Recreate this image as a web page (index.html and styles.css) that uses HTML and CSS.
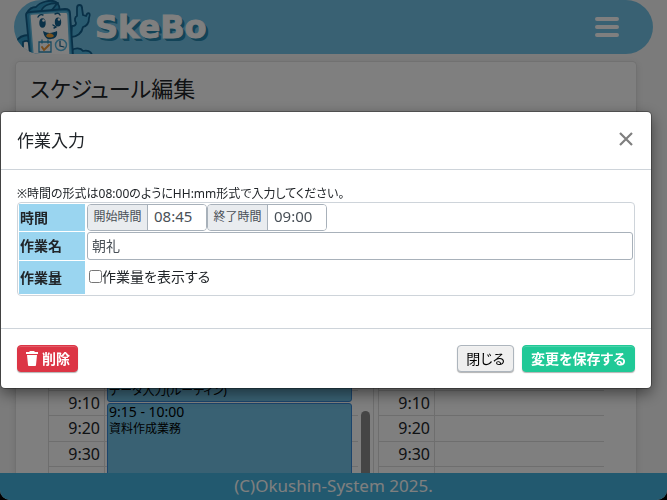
FILE: index.html
```html
<!DOCTYPE html>
<html lang="ja">
<head>
  <meta charset="UTF-8">
  <meta name="viewport" content="width=device-width, initial-scale=1">
  <title>SkeBo</title>
  <link rel="stylesheet" href="styles.css">
</head>
<body>
  <div class="page">
    <header class="navbar">
      <a class="brand" href="#">
        <svg class="mascot" width="80" height="54" viewBox="0 0 80 54" aria-hidden="true">
          <g stroke="#12618f" stroke-width="1.8" stroke-linejoin="round" stroke-linecap="round">
            <path fill="#329bc9" d="M15 35C8 35 4 38 2 42l5 7c2-3 5-5 9-5z"/>
            <path fill="#fff" d="M9 42c3-2 6-1 7 1l1 9H9z"/>
            <path fill="#52b5de" d="M58 26c3 0 4-1 4-3-2-3-1-6 1-7V8c0-4 5-4 5 0l1 7 3 1 1-2c2-2 4 0 2 4 0 5-2 8-6 9-1 6-6 10-12 10z"/>
            <path fill="#52b5de" d="M57 51c4-4 10-3 12 0 4-1 8 0 9 4H57z"/>
            <path fill="#329bc9" d="M13 13c2-4 5-6 9-6 4-5 15-8 20-5 3 2 4 6 3 8-7 4-21 4-32 3z"/>
            <path fill="#52b5de" d="M27 12c1-6 8-9 17-9-3 2-3 4-7 8z"/>
            <path fill="#329bc9" d="M12 15c0-2 2-3 4-3l35-3c3 0 5 1 5 4l3 42H16z"/>
            <path fill="#fff" stroke="#65bce1" stroke-width="1.4" d="M18 14l33-2c2 0 3 1 3 3l2 40H19L16 17c0-2 0-3 2-3z"/>
          </g>
          <g fill="#12618f">
            <ellipse cx="28.500" cy="23" rx="3.200" ry="4.800"/>
            <ellipse cx="44" cy="22" rx="3.200" ry="4.500"/>
            <path d="M29 31c5 3 10 2 14 0 1 5-2 8-6 8-4 1-7-2-8-8z"/>
          </g>
          <circle cx="29.500" cy="20.500" r="1.300" fill="#fff"/>
          <circle cx="45" cy="19.500" r="1.300" fill="#fff"/>
          <path fill="#f5a43a" d="M32 36c2-4 6-3 8 0-2 2-6 2-8 0z"/>
          <g fill="none" stroke-linecap="round">
            <path stroke="#12618f" stroke-width="1.400" d="M24 17c1-2 3-3 5-2m12-1c2-1 4-1 5 1m-7 10l3 2-2 1"/>
            <path stroke="#2c91c2" stroke-width="1.300" d="M25 42h12v10H25zM28 40v3m6-3v3"/>
            <path stroke="#ee983b" stroke-width="2" d="M28 47l2 3 5-5"/>
            <circle cx="47" cy="45" r="5.500" stroke="#5bb7df" stroke-width="1.500"/>
            <path stroke="#12618f" stroke-width="1.200" d="M46 41v5l4 1"/>
          </g>
        </svg>
        <span class="brand-name">SkeBo</span>
      </a>
      <button class="menu-button" aria-label="メニュー">
        <svg width="24" height="20" viewBox="0 0 24 20"><path d="M2 2h20M2 10h20M2 18h20" stroke="#fff" stroke-width="4" stroke-linecap="round"/></svg>
      </button>
    </header>

    <main class="card">
      <h1>スケジュール編集</h1>
      <div class="calendars">
        <div class="pane">
          <div class="calendar">
            <span class="time">7:30</span>
            <span class="time">7:40</span>
            <span class="time">7:50</span>
            <span class="time">8:00</span>
            <span class="time">8:10</span>
            <span class="time">8:20</span>
            <span class="time">8:30</span>
            <span class="time">8:40</span>
            <span class="time">8:50</span>
            <span class="time">9:00</span>
            <span class="time">9:10</span>
            <span class="time">9:20</span>
            <span class="time">9:30</span>
            <span class="time">9:40</span>
            <div class="event event-routine"><span class="event-time">9:00 - 9:15</span><br>データ入力(ルーティン)</div>
            <div class="event event-document"><span class="event-time">9:15 - 10:00</span><br>資料作成業務</div>
          </div>
          <div class="scrollbar"><div class="thumb"></div></div>
        </div>
        <div class="pane">
          <div class="calendar">
            <span class="time">7:30</span>
            <span class="time">7:40</span>
            <span class="time">7:50</span>
            <span class="time">8:00</span>
            <span class="time">8:10</span>
            <span class="time">8:20</span>
            <span class="time">8:30</span>
            <span class="time">8:40</span>
            <span class="time">8:50</span>
            <span class="time">9:00</span>
            <span class="time">9:10</span>
            <span class="time">9:20</span>
            <span class="time">9:30</span>
            <span class="time">9:40</span>
          </div>
        </div>
      </div>
    </main>

    <footer class="footer">(C)Okushin-System 2025.</footer>
  </div>

  <div class="backdrop">
    <form class="modal" role="dialog" aria-labelledby="modal-title">
      <div class="modal-header">
        <h2 id="modal-title">作業入力</h2>
        <button type="button" class="close" aria-label="閉じる">
          <svg width="14" height="14" viewBox="0 0 14 14"><path d="M1 1l12 12M13 1L1 13" stroke="#7f7f7f" stroke-width="2.200"/></svg>
        </button>
      </div>
      <div class="modal-body">
        <p class="note">※時間の形式は08:00のようにHH:mm形式で入力してください。</p>
        <table class="work">
          <tr>
            <th>時間</th>
            <td>
              <div class="times">
                <div class="input-group">
                  <label for="start">開始時間</label>
                  <input type="text" id="start" value="08:45">
                </div>
                <div class="input-group">
                  <label for="end">終了時間</label>
                  <input type="text" id="end" value="09:00">
                </div>
              </div>
            </td>
          </tr>
          <tr>
            <th><label for="name">作業名</label></th>
            <td><input type="text" id="name" class="name" value="朝礼"></td>
          </tr>
          <tr class="amount">
            <th>作業量</th>
            <td><label class="check"><input type="checkbox">作業量を表示する</label></td>
          </tr>
        </table>
      </div>
      <div class="modal-footer">
        <button type="button" class="btn btn-danger">
          <svg width="14" height="15" viewBox="0 0 14 15"><path fill="#fff" d="M1 1h3l1-1h4l1 1h3v2H1zM2 4h10l-1 10c0 1-1 1-1 1H4s-1 0-1-1z"/></svg>
          削除
        </button>
        <button type="button" class="btn btn-default">閉じる</button>
        <button type="submit" class="btn btn-success">変更を保存する</button>
      </div>
    </form>
  </div>
</body>
</html>
```
FILE: styles.css
```css
* {
  box-sizing: border-box;
}
html {
  background: #000;
}
body {
  margin: 0;
  color: #212529;
  font-family: "Noto Sans", "Noto Sans CJK JP", sans-serif;
  font-feature-settings: "palt";
  font-size: 15px;
}
button, input {
  font: inherit;
  font-feature-settings: inherit;
}
h1, h2, p {
  margin: 0;
  font-weight: normal;
}

.page {
  display: flex;
  flex-direction: column;
  height: 100vh;
  overflow: hidden;
  background: #f6f6f6;
  border-radius: 0 0 10px 10px;
}
.navbar {
  display: flex;
  flex: none;
  align-items: center;
  justify-content: space-between;
  height: 54px;
  margin: 0 14px;
  padding-right: 34px;
  overflow: hidden;
  background: #72c3e7;
  border-radius: 27px;
}
.brand {
  display: flex;
  align-items: center;
  gap: 1px;
  color: #fff;
  text-decoration: none;
}
.mascot {
  display: block;
}
.brand-name {
  font-family: "DejaVu Sans", sans-serif;
  font-size: 32px;
  font-weight: bold;
  line-height: 54px;
  -webkit-text-stroke: 1px #fff;
  text-shadow: 1px 1px #2787ae, 2px 2px #2787ae, 3px 3px #2787ae;
}
.menu-button {
  display: flex;
  padding: 0;
  background: none;
  border: 0;
}

.card {
  flex: 1;
  min-height: 0;
  margin: 7px 30px 0 15px;
  padding: 0 32px;
  overflow: hidden;
  background: #fff;
  border: 1px solid #e2e2e2;
  border-bottom: 0;
  border-radius: 5px 5px 0 0;
  box-shadow: 0 2px 6px #ddd;
}
.card h1 {
  margin-left: -18px;
  height: 74px;
  font-size: 22px;
  line-height: 52px;
}
.calendars {
  display: flex;
  gap: 4px;
}
.pane {
  display: flex;
  flex: 1;
  border: 1px solid #ddd;
  border-width: 0 1px;
}
.pane:last-child {
  flex: 0 0 226px;
  border-right: 0;
}
.calendar {
  display: grid;
  flex: 1;
  grid-template-columns: 56px 1fr;
  grid-template-rows: repeat(30, 1fr);
  height: 381px;
  background: repeating-linear-gradient(#ddd 0 1px, #fff 1px 25.4px);
}
.time {
  grid-column: 1;
  grid-row: span 2;
  padding-right: 4px;
  border-right: 1px solid #ddd;
  font-size: 16px;
  line-height: 27px;
  text-align: right;
}
.event {
  grid-column: 2;
  margin: 0 6px 1px 2px;
  padding: 0 1px;
  overflow: hidden;
  background: #72c3e7;
  border: 1px solid #3788d8;
  border-radius: 3px;
  color: #000;
  font-size: 12px;
  line-height: 16px;
}
.event-time {
  font-size: 14px;
}
.event-routine {
  grid-row: 19 / 22;
}
.event-document {
  grid-row: 22 / 31;
}
.scrollbar {
  width: 15px;
  padding: 275px 3px 0;
}
.thumb {
  height: 100%;
  background: #8b8b8b;
  border-radius: 5px;
}
.footer {
  flex: none;
  height: 27px;
  background: #44b2de;
  color: #fff;
  line-height: 26px;
  text-align: center;
  font-size: 17px;
}

.backdrop {
  position: fixed;
  inset: 0;
  padding: 112px 16px 0 1px;
  background: rgba(0, 0, 0, .5);
}
.modal {
  background: #fff;
  border-radius: 4px;
  box-shadow: 0 5px 15px rgba(0, 0, 0, .5), 0 0 0 1px rgba(0, 0, 0, .3);
}
.modal-header {
  display: flex;
  align-items: center;
  justify-content: space-between;
  height: 58px;
  padding: 0 18px 0 16px;
  border-bottom: 1px solid #ced4da;
}
.modal-header h2 {
  font-size: 17px;
  line-height: 20px;
}
.close {
  padding: 0 0 4px;
  background: none;
  border: 0;
}
.close svg {
  display: block;
}
.modal-body {
  padding: 16px 16px 32px;
}
.note {
  font-size: 12px;
  line-height: 16px;
}
.work {
  width: 100%;
  border: 1px solid #ced4da;
  border-radius: 4px;
  border-spacing: 1px;
}
.work th {
  width: 66px;
  padding: 0 1px;
  background: #9ad5f0;
  font-size: 14px;
  line-height: 20px;
  text-align: left;
}
.work td {
  height: 27px;
  padding: 0 0 0 1px;
}
.work .amount td {
  height: 33px;
}
.times, .input-group {
  display: flex;
}
.input-group {
  width: 120px;
  height: 27px;
  border: 1px solid #a8b1ba;
  border-radius: 4px;
  overflow: hidden;
}
.input-group label {
  flex: none;
  width: 60px;
  background: #e9ecef;
  border-right: 1px solid #a8b1ba;
  color: #495057;
  font-size: 12px;
  line-height: 24px;
  text-align: center;
}
.input-group input {
  width: 100%;
  min-width: 0;
  padding: 0 6px 3px;
  border: 0;
  color: #495057;
}
.name {
  display: block;
  width: 100%;
  height: 28px;
  padding: 0 4px 2px;
  border: 1px solid #a8b1ba;
  border-radius: 3px;
  color: #495057;
  font-size: 14px;
}
.check {
  display: flex;
  align-items: center;
  font-size: 14px;
  line-height: 20px;
  padding-bottom: 2px;
}
.check input {
  margin: 0 0 0 2px;
}
.modal-footer {
  display: flex;
  gap: 8px;
  padding: 16px;
  border-top: 1px solid #ced4da;
}
.btn {
  display: flex;
  align-items: center;
  gap: 3px;
  height: 27px;
  padding: 0 8px;
  border: 1px solid;
  border-radius: 4px;
  box-shadow: inset 0 1px rgba(255, 255, 255, .2), 0 1px 1px rgba(0, 0, 0, .3);
  font-size: 14px;
  line-height: 20px;
}
.btn-danger {
  margin-right: auto;
  padding: 0 7px;
  background: #dc3545;
  border-color: #dc3545;
  color: #fff;
  font-weight: bold;
}
.btn-default {
  background: #efefef;
  border-color: #adb5bd;
}
.btn-success {
  background: #20c997;
  border-color: #20c997;
  color: #fff;
  font-weight: bold;
}
```
